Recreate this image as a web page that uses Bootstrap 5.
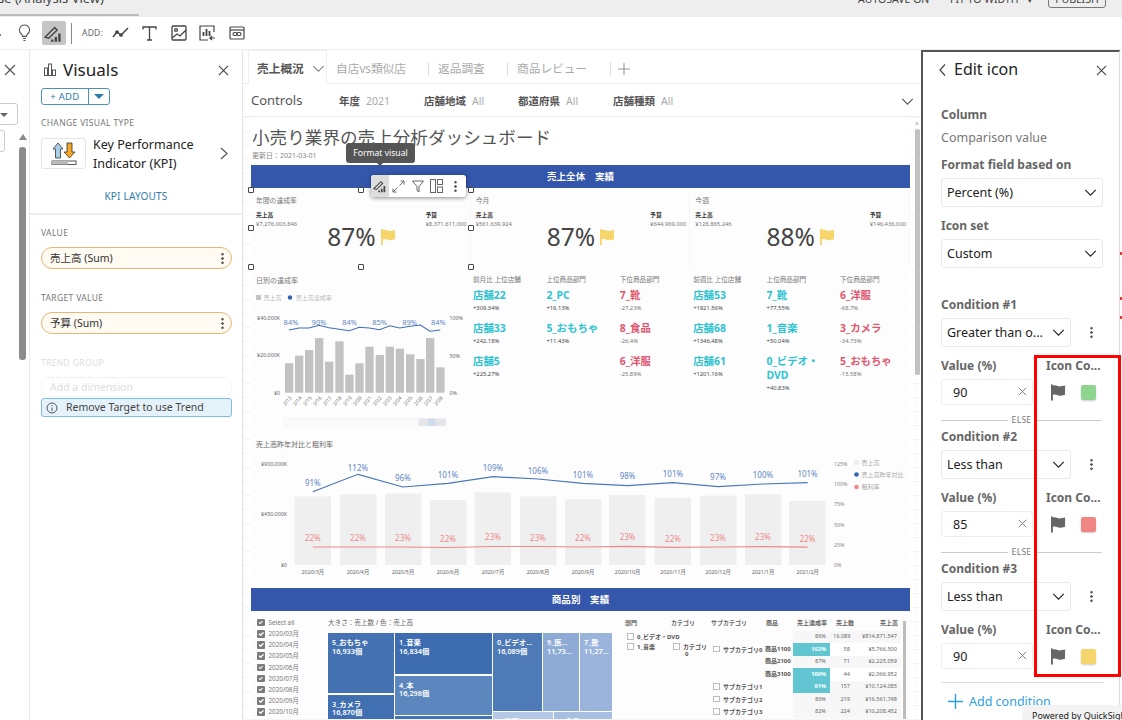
<!DOCTYPE html>
<html lang="ja">
<head>
<meta charset="utf-8">
<title>Edit icon</title>
<link href="https://cdn.jsdelivr.net/npm/bootstrap@5.3.0/dist/css/bootstrap.min.css" rel="stylesheet">
<style>
html,body{width:1122px;height:720px;overflow:hidden;margin:0;background:#fff}
body{font-family:"Noto Sans","Noto Sans CJK JP",sans-serif;color:#333;font-size:12px;line-height:1.2}
svg text{font-family:"Noto Sans","Noto Sans CJK JP",sans-serif}
.stage{position:relative;width:1122px;height:720px;overflow:hidden}
.topbar{height:17px;background:#eee;overflow:hidden;position:relative;color:#444}
.topbar-title{font-size:13px;width:139px;height:16px;border-bottom:2px solid #bbb;white-space:nowrap;overflow:hidden;flex:none}
.topbar-title span{display:block;margin-top:-10px;margin-left:-2px;line-height:16px}
.topbar-right{margin-top:-10px;font-size:10.5px;line-height:18px;height:18px}
.as{margin-left:858px;width:92px;white-space:nowrap}
.fit{width:98px;white-space:nowrap}
.pub{width:58px;height:18px;border:1px solid #777;border-radius:3px;text-align:center;line-height:16px}
.toolbar{height:33px;background:#fff;border-bottom:1px solid #eee}
.tool{width:29px;height:33px;flex:none}
.tool-first{margin-left:-19px}
.tool-on{background:#c5c5c5;width:24px;height:24px;border-radius:2px;margin:0 2.5px}
.tsep{width:1px;height:21px;background:#888;margin:0 10px 0 3px;flex:none}
.addlbl{font-size:8.5px;color:#666;width:23px;letter-spacing:.2px;flex:none}
.tool-gap{margin-left:1px}
.work{height:670px}
.stub{width:30px;flex:none;border-right:1px solid #e8e8e8;position:relative}
.stub-x{position:absolute;left:4px;top:14px}
.stub-dd{position:absolute;left:-6px;top:53px;width:24px;height:22px;border:1px solid #ccc;border-radius:3px}
.stub-tri{position:absolute;left:0;top:63px;width:0;height:0;border-left:4px solid transparent;border-right:4px solid transparent;border-top:4px solid #666}
.stub-dd2{position:absolute;left:-10px;top:80px;width:15px;height:22px;border:1px solid #ccc;border-radius:3px}
.stub-up{position:absolute;left:19px;top:84px;width:0;height:0;border-left:4px solid transparent;border-right:4px solid transparent;border-bottom:6px solid #888}
.stub-thumb{position:absolute;left:19px;top:97px;width:7px;height:213px;background:#8b8b8b;border-radius:3px}
.vis{width:213px;flex:none;border-right:1px solid #e6e6e6}
.vis-head{height:38px;padding:2px 13px 0 14px}
.vis-title{font-size:17px;color:#222;margin-left:7px}
.addgrp{margin-left:11px;width:69px;height:17px;border:1px solid #4a90b8;border-radius:3px;color:#2d7cab;font-size:9.5px;overflow:hidden}
.addgrp-l{width:47px;letter-spacing:.3px}
.addgrp-r{width:22px;height:100%;border-left:1px solid #4a90b8}
.tri{width:0;height:0;border-left:5px solid transparent;border-right:5px solid transparent;border-top:5px solid #2d7cab}
.seclbl{font-size:8.5px;color:#777;letter-spacing:.35px;margin-left:11px;line-height:10px}
.sec-first{margin-top:13px}
.sec-val{margin-top:13px}
.sec-tv{margin-top:24px}
.sec-tr{margin-top:24px;color:#ddd}
.type-row{margin:10px 0 0 11px;height:31px}
.type-box{width:45px;height:31px;border:1px solid #e5e5e5;border-radius:3px;flex:none}
.type-txt{font-size:12.5px;line-height:19px;color:#222;margin-left:7px;width:127px;white-space:nowrap}
.kpilay{font-size:10px;color:#2f7dae;text-align:center;margin-top:22px;letter-spacing:.2px;line-height:10px}
.hr1{height:2px;background:#eee;margin-top:12px}
.pill{margin:9px 10px 0 11px;height:22px;border:1.5px solid #e6b873;border-radius:11px;background:#fffaf2;padding:0 7px 0 8px;font-size:10.5px;color:#333}
.kebab{width:3px;height:13px;background:radial-gradient(circle,#555 1.1px,transparent 1.4px) 0 0/3px 4.33px repeat-y;flex:none}
.dashed{margin:9px 10px 0 11px;height:20px;border:1.5px dotted #d5ebf7;border-radius:9px;color:#ddd;font-size:10.5px;padding:0 8px}
.infobox{margin:1px 10px 0 11px;height:19px;border:1px solid #7dbce4;border-radius:3px;background:#e6f2fa;font-size:10.5px;color:#444;padding:0 4px}
.center{width:678px;flex:none;position:relative;overflow:hidden}
.tabs{height:34px;border-bottom:1px solid #eee;padding-left:5px;background:#fff}
.tab-on{width:79px;height:34px;border:1px solid #eee;border-bottom:1px solid #fff;padding:4px 0 0 8px;font-weight:700;font-size:11.7px;color:#555;flex:none;gap:8px}
.tab-off{font-size:11.7px;color:#aaa;white-space:nowrap;flex:none;padding-top:4px}
.vsep{width:1px;height:14px;background:#ddd;flex:none;margin-top:4px}
.t-a{margin-left:9px;width:83px}
.t-b{margin-left:9px;width:69px}
.t-c{margin-left:9px;width:93px}
.s-a{margin-left:9px}
.plus{margin:4px 0 0 7px}
.ctl{height:33px;border-bottom:1px solid #eee;padding:2px 0 0 8px;position:relative}
.ctl-t{font-size:13px;color:#555;width:88px;flex:none}
.ctl-k{font-weight:700;font-size:10.5px;color:#555;flex:none;margin-right:6px}
.ctl-v{font-size:10.5px;color:#aaa;flex:none}
.cv1{width:58px}.cv2{width:46px}.cv3{width:47px}.cv4{width:240px}
.sheet{height:603px;padding-left:8px;background-color:#fff;background-image:linear-gradient(#f5f5f5 1px,transparent 1px),linear-gradient(90deg,#f7f7f7 1px,transparent 1px);background-size:14px 14px}
.sheet-in{width:659px;flex:none}
.bar-scroll{position:relative;width:5px;margin-left:5px;flex:none}
.scr-thumb{position:absolute;top:12px;left:0;width:5px;height:246px;background:#c2c2c2;border-radius:2px}
.scr-up{position:absolute;top:4px;left:0;width:0;height:0;border-left:2.5px solid transparent;border-right:2.5px solid transparent;border-bottom:4px solid #ccc}
.dash-title{font-size:17.6px;color:#555;height:34px;padding-top:9px;line-height:22px;white-space:nowrap;background:#fff;padding-left:1px}
.dash-date{font-size:7px;color:#888;height:14px;padding:1px 0 0 1px;background:#fff}
.band{height:23px;background:#3557ab;color:#fff;font-weight:700;font-size:9.5px;letter-spacing:.1px}
.kpi-row{height:80px;background:#fdfdfd}
.kpi{padding:9px 3px 0 5px;flex:1 1 0;border-right:1px solid #f6f6f6}
.kpi-t{font-size:6.8px;color:#777;line-height:8px}
.kpi-s{margin-top:6px;font-size:5.8px;line-height:9px;color:#777;height:18px}
.kpi-s b{display:block;color:#333;font-weight:700}
.kpi-big{margin-top:-6px;height:28px;font-size:24.5px;color:#444;line-height:28px;gap:5px}
.mid{height:164px;background:#fdfdfd}
.daily{width:220px;flex:none;display:block}
.tops{flex:1}
.topcol{width:73.4px;flex:none;padding:8px 0 0 2px}
.topcol-h{font-size:6.6px;color:#777;line-height:8px;height:8px;white-space:nowrap}
.topcol-i{height:33px;padding-top:4px}
.big-t{font-size:10.4px;font-weight:700;line-height:14px;white-space:nowrap}
.big-t.up{color:#2cc3d1}
.big-t.dn{color:#e0566f}
.sub-t{font-size:5.8px;color:#444;line-height:9px;margin-top:2px}
.dn+.sub-t{color:#777}
.combo{display:block;width:659px;height:156px;background:#fdfdfd}
.prod{height:108px;background:#fdfdfd;overflow:hidden}
.filt{width:77px;flex:none;padding:6px 0 0 6px}
.filt-i{height:11.2px;font-size:6.3px;color:#777;gap:4px;white-space:nowrap}
.filt-i .form-check-input{width:7.5px;height:7.5px;margin:0;background-color:#7b7b7b;border:0;border-radius:1px;flex:none;float:none}
.tree-wrap{width:293px;flex:none}
.tree-t{font-size:6.6px;color:#666;height:22px;padding-top:8px;line-height:8px}
.tree{width:284px;gap:1.5px;color:#fff;font-size:7.3px;line-height:8.6px;font-weight:600;height:90px}
.tc{padding:5px 0 0 4px;overflow:hidden;white-space:nowrap;flex:none}
.tstack{display:flex;flex-direction:column;gap:1.5px;flex:none}
.ts1{width:65.5px}.ts2{width:96.5px}.ts3{width:119px}
.c-toy{height:60px;background:#4472b3}.c-cam{height:40px;background:#4170b2}
.c-mus{height:41px;background:#3d6cb0}.c-book{height:39px;background:#5c86be}.c-x{height:20px;background:#4472b3}
.tr-a{height:77.5px;gap:1.5px}.tr-b{height:20px;gap:1.5px}
.c-vid{width:48.5px;height:77.5px;background:#4e7ab7}.c-med{width:35.5px;height:77.5px;background:#8eabd6}.c-sho{width:32px;height:77.5px;background:#99b3db}
.c-clo{width:59.5px;height:20px;background:#b4c7e5}.c-foo{width:58px;height:20px;background:#a9bfe1}
.pv-wrap{width:279px;flex:none;margin-left:1px}
.pv.table{width:279px;table-layout:fixed;margin:6px 0 0;--bs-table-bg:transparent;font-size:5.6px;color:#666}
.pv.table>:not(caption)>*>*{padding:0 3px;height:12.5px;line-height:7px;border:0;box-shadow:none;vertical-align:middle;white-space:nowrap;background:transparent;overflow:hidden}
.pv.table>thead>tr>th{font-weight:700;font-size:6px;color:#666;height:13.5px}
.pv.table>:not(caption)>*>*.nm{font-weight:700;font-size:6px;color:#555;padding-left:5px}
.pv.table>:not(caption)>*>*.np{padding-left:2px}
.pv .nm i{display:inline-block;width:6.5px;height:6.5px;border:1px solid #bbb;margin-right:3.5px;vertical-align:-1px}
.pv.table>:not(caption)>*>*.mt{text-align:right;background:#f7f7f7;padding-right:4px}
.pv.table>:not(caption)>*>*.mt.wh{background:#fff}
.pv.table>:not(caption)>*>*.m2{padding-right:7px}
.pv.table>:not(caption)>*>*.hit{background:#62c6d2;color:#fff;font-weight:700;text-align:right;padding-right:4px}
.c1{width:46px}.c2{width:40px}.c3{width:55px}.c4{width:30px}.c5{width:37px}.c6{width:27px}.c7{width:44px}
.pv-scroll{width:3px;background:#bdbdbd;height:100px;margin:10px 0 0 2px;flex:none}
.edit{width:199px;height:670px;flex:none;border:solid #555;border-width:2px 0 0 2px;border-right:1px solid #ddd;padding-left:18px;position:relative;overflow:hidden}
.edit-head{height:36px;width:166px}
.edit-back{margin-left:-2px}
.edit-title{font-size:16px;color:#222;margin-left:8px}
.flbl{font-weight:700;font-size:12px;color:#666;height:18px;line-height:18px;white-space:nowrap}
.fval{font-size:12.5px;color:#777;height:18px;line-height:18px}
.sel{height:29px;border:1px solid #e9e9e9;border-radius:3px;font-size:12.5px;color:#222;padding:0 5px;width:162px;background:#fff}
.sel-s{width:130px}
.mt4{margin-top:4px}.mt5{margin-top:5px}.mt9{margin-top:9px}.mt10{margin-top:10px}.mt18{margin-top:18px}.mt28{margin-top:28px}
.inp.form-control{width:92px;height:26px;border:1px solid #eee;border-radius:3px;font-size:12.5px;color:#222;padding:0 0 0 11px;box-shadow:none}
.inp-wrap{position:relative;width:92px;flex:none;margin-top:4px}
.inp-x{position:absolute;left:77px;top:8px}
.iconcol{margin-left:13px;width:62px;flex:none}
.ic-swatches{margin-top:4px;height:26px;padding-left:5px;gap:15px}
.sw{width:15px;height:15px;border-radius:2px;box-shadow:0 1px 2px rgba(0,0,0,.2)}
.sw-g{background:#8ed68f}.sw-r{background:#f08683}.sw-y{background:#f6d56a}
.keb-g{margin-left:19px}
.else-row{height:15px;margin-top:8px;width:161px;gap:4px;font-size:8.5px;color:#777;letter-spacing:.3px}
.else-line{height:1px;background:#ccc;flex:1}
.add-cond{margin-top:5px;color:#2e9fe0;font-size:12.5px;height:26px;padding-left:7px;gap:6px}
.hr2{height:1px;background:#ddd;width:163px;margin-top:13px}
.redbox{position:absolute;left:1034px;top:355px;width:87px;height:322px;border:3px solid #f00;z-index:20}
.pw{position:absolute;left:1022px;top:705px;width:100px;height:15px;background:#f3f3f3;font-size:9px;color:#222;white-space:nowrap;gap:4px;padding:5px 0 0 6px;z-index:21;overflow:hidden;line-height:11px}
.hd{position:absolute;width:6px;height:6px;border:1.2px solid #444;background:#fff;border-radius:1px;z-index:5}
.h1{left:248px}.h2{left:358px}.h3{left:468px}
.ya{top:187px}.yb{top:225px}.yc{top:264px}
.tip{position:absolute;left:346px;top:143px;width:69px;height:20px;background:#555;color:#fff;font-size:8.6px;border-radius:3px;z-index:6}
.tip::after{content:"";position:absolute;left:31px;top:20px;border-left:3px solid transparent;border-right:3px solid transparent;border-top:3px solid #555}
.fmt{position:absolute;left:371px;top:175px;width:95px;height:22px;background:#fff;border-radius:3px;box-shadow:0 1px 4px rgba(0,0,0,.45);z-index:6}
.fmt-on{width:18px;height:22px;background:#ddd;border-radius:3px 0 0 3px}
.fmt-i{width:19px;height:22px}
.edge{position:absolute;left:1120px;width:2px;height:3px;background:#e33;z-index:1}
.e1{top:252px}.e2{top:297px}.e3{top:316px}
</style>
</head>
<body>
<svg width="0" height="0" class="d-block position-absolute">
<symbol id="flag" viewBox="0 0 16 17"><path d="M0 0h2v17H0zM2 1c3-1 5 1 7 1 2 0 4-.6 6-1v10c-2 .6-4 1-6 1-2 0-4-2-7-1z"/></symbol>
<symbol id="x" viewBox="0 0 12 12"><path d="M1 1l10 10M11 1L1 11" stroke="currentColor" stroke-width="1.2" fill="none"/></symbol>
<symbol id="chev" viewBox="0 0 14 8"><path d="M1 1l6 6 6-6" stroke="currentColor" stroke-width="1.3" fill="none"/></symbol>
<symbol id="fmtico" viewBox="0 0 16 16"><path d="M1 11L9 3l2 2-7 7z" fill="none" stroke="currentColor" stroke-width="1.2"/><path d="M9 15v-4h2v4zM12 15V8h2v7zM6 15v-2h2v2z" fill="currentColor"/></symbol>
</svg>
<div class="stage">
 <div class="topbar d-flex">
  <div class="topbar-title"><span>se (Analysis View)</span></div>
  <div class="topbar-right d-flex position-absolute top-0 start-0">
   <div class="as">AUTOSAVE ON</div><div class="fit">FIT TO WIDTH &#160; &#9662;</div><div class="pub">PUBLISH</div>
  </div>
 </div>
 <div class="toolbar d-flex align-items-center">
  <div class="tool tool-first d-flex align-items-center justify-content-center"><svg width="14" height="18" viewBox="0 0 14 18" fill="none" stroke="#555" stroke-width="1.3"><path d="M9 2L2 11h10M9 2v14"/></svg></div>
  <div class="tool d-flex align-items-center justify-content-center"><svg width="13" height="18" viewBox="0 0 13 18" fill="none" stroke="#555" stroke-width="1.1"><path d="M6.5 1a5 5 0 0 0-3 9c.7.6 1 1.4 1 2.4h4c0-1 .3-1.8 1-2.4a5 5 0 0 0-3-9zM5 14.5h3M5.5 16.5h2"/></svg></div>
  <div class="tool tool-on d-flex align-items-center justify-content-center"><svg width="19" height="19" viewBox="0 0 16 16" color="#444"><use href="#fmtico"/></svg></div>
  <div class="tsep"></div>
  <div class="addlbl">ADD:</div>
  <div class="tool tool-gap d-flex align-items-center justify-content-center"><svg width="17" height="12" viewBox="0 0 17 12" fill="none" stroke="#444" stroke-width="1.5"><path d="M1 10l4-5 4 3 7-7"/><circle cx="5" cy="5" r="1.1" fill="#444"/><circle cx="9" cy="8" r="1.1" fill="#444"/></svg></div>
  <div class="tool d-flex align-items-center justify-content-center"><svg width="15" height="15" viewBox="0 0 15 15" fill="none" stroke="#444" stroke-width="1.3"><path d="M1 3.5V1h13v2.5M7.5 1v13M5 14h5"/></svg></div>
  <div class="tool d-flex align-items-center justify-content-center"><svg width="16" height="16" viewBox="0 0 16 16" fill="none" stroke="#444" stroke-width="1.3"><rect x="1" y="1" width="14" height="14" rx="1"/><circle cx="5" cy="5" r="1.4"/><path d="M1 13l5-4 3 2 6-6"/></svg></div>
  <div class="tool d-flex align-items-center justify-content-center"><svg width="17" height="16" viewBox="0 0 17 16" fill="none" stroke="#444" stroke-width="1.2"><path d="M15 7V1H1v14h8"/><path d="M4.5 11V7M7.5 11V4M10.5 11V6" stroke-width="1.8"/><path d="M16 13h-5l2-2M11 13l2 2"/></svg></div>
  <div class="tool d-flex align-items-center justify-content-center"><svg width="16" height="14" viewBox="0 0 16 14" fill="none" stroke="#444" stroke-width="1.2"><rect x="1" y="1" width="14" height="12" rx="1"/><path d="M1 4h14"/><rect x="4" y="6.5" width="4" height="3" rx="1.5"/><rect x="8" y="6.5" width="4" height="3" rx="1.5"/></svg></div>
 </div>
 <div class="work d-flex">
  <div class="stub">
   <svg class="stub-x" width="12" height="12" color="#555"><use href="#x"/></svg>
   <div class="stub-dd"></div><div class="stub-tri"></div><div class="stub-dd2"></div>
   <div class="stub-up"></div><div class="stub-thumb"></div>
  </div>
  <div class="vis">
   <div class="vis-head d-flex align-items-center justify-content-between">
    <div class="d-flex align-items-center"><svg width="12" height="13" viewBox="0 0 12 13" fill="none" stroke="#555"><rect x=".5" y="5" width="3" height="7.5"/><rect x="4.5" y="1" width="3" height="11.5"/><rect x="8.5" y="7" width="3" height="5.5"/></svg><span class="vis-title">Visuals</span></div>
    <svg width="11" height="11" color="#444"><use href="#x"/></svg>
   </div>
   <div class="addgrp d-flex align-items-center">
    <div class="addgrp-l text-center">+ ADD</div><div class="addgrp-r d-flex align-items-center justify-content-center"><span class="tri"></span></div>
   </div>
   <div class="seclbl sec-first">CHANGE VISUAL TYPE</div>
   <div class="type-row d-flex align-items-center">
    <div class="type-box d-flex align-items-center justify-content-center">
     <svg width="26" height="24" viewBox="0 0 26 24"><path d="M7 1l5 6H9.5v9h-5V7H2z" fill="#a9cfe8" stroke="#333" stroke-width=".8"/><path d="M16 1h5v9h3l-5.5 6-5.5-6h3z" fill="#f5a623" stroke="#333" stroke-width=".8"/><rect x="1" y="19" width="24" height="3.5" fill="#fff" stroke="#555"/><rect x="1" y="19" width="16" height="3.5" fill="#bbb"/></svg>
    </div>
    <div class="type-txt">Key Performance<br>Indicator (KPI)</div>
    <svg width="8" height="13" viewBox="0 0 8 13" fill="none" stroke="#555" stroke-width="1.2"><path d="M1 1l6 5.5L1 12"/></svg>
   </div>
   <div class="kpilay">KPI LAYOUTS</div>
   <div class="hr1"></div>
   <div class="seclbl sec-val">VALUE</div>
   <div class="pill d-flex align-items-center justify-content-between"><span>売上高 (Sum)</span><span class="kebab"></span></div>
   <div class="seclbl sec-tv">TARGET VALUE</div>
   <div class="pill d-flex align-items-center justify-content-between"><span>予算 (Sum)</span><span class="kebab"></span></div>
   <div class="seclbl sec-tr">TREND GROUP</div>
   <div class="dashed d-flex align-items-center">Add a dimension</div>
   <div class="infobox d-flex align-items-center gap-2"><svg width="12" height="12" viewBox="0 0 12 12" fill="none" stroke="#555"><circle cx="6" cy="6" r="5"/><path d="M6 5.5v3.5M6 3v1.2"/></svg><span>Remove Target to use Trend</span></div>
  </div>
  <div class="center">
   <div class="tabs d-flex align-items-center">
    <div class="tab-on d-flex align-items-center">売上概況<svg width="13" height="7" color="#888"><use href="#chev"/></svg></div>
    <div class="tab-off t-a">自店vs類似店</div>
    <div class="vsep s-a"></div>
    <div class="tab-off t-b">返品調査</div>
    <div class="vsep"></div>
    <div class="tab-off t-c">商品レビュー</div>
    <div class="vsep"></div>
    <svg class="plus" width="12" height="12" viewBox="0 0 12 12" stroke="#999" stroke-width="1.1"><path d="M6 0v12M0 6h12"/></svg>
   </div>
   <div class="ctl d-flex align-items-center">
    <div class="ctl-t">Controls</div>
    <div class="ctl-k">年度</div><div class="ctl-v cv1">2021</div>
    <div class="ctl-k">店舗地域</div><div class="ctl-v cv2">All</div>
    <div class="ctl-k">都道府県</div><div class="ctl-v cv3">All</div>
    <div class="ctl-k">店舗種類</div><div class="ctl-v cv4">All</div>
    <svg width="13" height="7" color="#555"><use href="#chev"/></svg>
   </div>
   <div class="sheet d-flex">
    <div class="sheet-in">
     <div class="dash-title">小売り業界の売上分析ダッシュボード</div>
     <div class="dash-date">更新日：2021-03-01</div>
     <div class="band d-flex align-items-center justify-content-center">売上全体　実績</div>
     <div class="kpi-row d-flex">
      <div class="kpi">
       <div class="kpi-t">年間の達成率</div>
       <div class="kpi-s d-flex justify-content-between"><div><b>売上高</b>¥7,276,003,846</div><div><b>予算</b>¥8,371,611,000</div></div>
       <div class="kpi-big d-flex align-items-center justify-content-center">87%<svg width="15" height="16" fill="#f6d56a"><use href="#flag"/></svg></div>
      </div>
      <div class="kpi">
       <div class="kpi-t">今月</div>
       <div class="kpi-s d-flex justify-content-between"><div><b>売上高</b>¥561,639,924</div><div><b>予算</b>¥644,969,000</div></div>
       <div class="kpi-big d-flex align-items-center justify-content-center">87%<svg width="15" height="16" fill="#f6d56a"><use href="#flag"/></svg></div>
      </div>
      <div class="kpi">
       <div class="kpi-t">今週</div>
       <div class="kpi-s d-flex justify-content-between"><div><b>売上高</b>¥128,865,246</div><div><b>予算</b>¥146,436,000</div></div>
       <div class="kpi-big d-flex align-items-center justify-content-center">88%<svg width="15" height="16" fill="#f6d56a"><use href="#flag"/></svg></div>
      </div>
     </div>
     <div class="mid d-flex">
      <svg class="daily" height="164" viewBox="251 268 220 164">
       <text x="256" y="283" font-size="7" fill="#777">日別の達成率</text>
       <rect x="256" y="295" width="5" height="5" fill="#c4c4c4"/><text x="263.5" y="300" font-size="6" fill="#bbb">売上高</text>
       <circle cx="290" cy="297.5" r="2.2" fill="#3464b4"/><text x="295.7" y="300" font-size="6" fill="#bbb">売上高達成率</text>
       <g font-size="5.3" fill="#666" text-anchor="end"><text x="280" y="320">¥40,000K</text><text x="280" y="357">¥20,000K</text><text x="280" y="394.5">¥0</text></g>
       <g font-size="5.3" fill="#666"><text x="449.5" y="320">100%</text><text x="449.5" y="357.5">50%</text><text x="449.5" y="394.5">0%</text></g>
       <g fill="#c2c2c2">
        <rect x="285" y="363.3" width="8.3" height="29.4"/><rect x="295" y="355.7" width="8.3" height="37"/><rect x="305" y="350" width="8.3" height="42.7"/><rect x="315" y="338" width="8.3" height="54.7"/><rect x="325" y="361.7" width="8.3" height="31"/><rect x="335.3" y="341.3" width="8.3" height="51.4"/><rect x="345.3" y="374.7" width="8.3" height="18"/><rect x="355.3" y="363.3" width="8.3" height="29.4"/><rect x="365.3" y="346.7" width="8.3" height="46"/><rect x="375.7" y="355" width="8.3" height="37.7"/><rect x="385.7" y="346.7" width="8.3" height="46"/><rect x="395.7" y="348.7" width="8.3" height="44"/><rect x="406" y="354.3" width="8.3" height="38.4"/><rect x="416.3" y="359" width="8.3" height="33.7"/><rect x="426" y="338" width="8.3" height="54.7"/><rect x="436.3" y="367.3" width="8.3" height="25.4"/>
       </g>
       <polyline points="289,330 299,328 309,328 319,325.3 329,327.7 339.3,329.3 349.3,330.7 359.3,327.3 369.3,328 379.7,329.7 389.7,325.7 399.7,328 410,326.3 420.3,325 430,331.3 440.3,330" fill="none" stroke="#3f6fb8" stroke-width="1.1"/>
       <g font-size="7.5" fill="#5d87c6" text-anchor="middle"><text x="291" y="325">84%</text><text x="319" y="325">90%</text><text x="349.7" y="325">84%</text><text x="379.7" y="325">85%</text><text x="409.7" y="325">89%</text><text x="438.3" y="325">84%</text></g>
       <g font-size="5" fill="#666" text-anchor="end">
        <text transform="translate(292,398) rotate(-50)">2/13</text><text transform="translate(302,398) rotate(-50)">2/14</text><text transform="translate(312,398) rotate(-50)">2/15</text><text transform="translate(322,398) rotate(-50)">2/16</text><text transform="translate(332,398) rotate(-50)">2/17</text><text transform="translate(342,398) rotate(-50)">2/18</text><text transform="translate(352,398) rotate(-50)">2/19</text><text transform="translate(362,398) rotate(-50)">2/20</text><text transform="translate(372,398) rotate(-50)">2/21</text><text transform="translate(382,398) rotate(-50)">2/22</text><text transform="translate(392,398) rotate(-50)">2/23</text><text transform="translate(402,398) rotate(-50)">2/24</text><text transform="translate(412.5,398) rotate(-50)">2/25</text><text transform="translate(423,398) rotate(-50)">2/26</text><text transform="translate(433,398) rotate(-50)">2/27</text><text transform="translate(443,398) rotate(-50)">2/28</text>
       </g>
       <rect x="284" y="418.7" width="162" height="7.3" fill="#fafafa" stroke="#eee" stroke-width=".5"/>
       <rect x="418.3" y="418.7" width="27.5" height="7.3" fill="#e4e6ea"/><rect x="428" y="418.7" width="7.5" height="7.3" fill="#cfdcec"/>
      </svg>
      <div class="tops d-flex">
       <div class="topcol">
        <div class="topcol-h">前月比 上位店舗</div>
        <div class="topcol-i"><div class="big-t up">店舗22</div><div class="sub-t">+309.34%</div></div>
        <div class="topcol-i"><div class="big-t up">店舗33</div><div class="sub-t">+242.18%</div></div>
        <div class="topcol-i"><div class="big-t up">店舗5</div><div class="sub-t">+225.27%</div></div>
       </div>
       <div class="topcol">
        <div class="topcol-h">上位商品部門</div>
        <div class="topcol-i"><div class="big-t up">2_PC</div><div class="sub-t">+16.13%</div></div>
        <div class="topcol-i"><div class="big-t up">5_おもちゃ</div><div class="sub-t">+11.43%</div></div>
       </div>
       <div class="topcol">
        <div class="topcol-h">下位商品部門</div>
        <div class="topcol-i"><div class="big-t dn">7_靴</div><div class="sub-t">-27.23%</div></div>
        <div class="topcol-i"><div class="big-t dn">8_食品</div><div class="sub-t">-26.4%</div></div>
        <div class="topcol-i"><div class="big-t dn">6_洋服</div><div class="sub-t">-25.89%</div></div>
       </div>
       <div class="topcol">
        <div class="topcol-h">前週比 上位店舗</div>
        <div class="topcol-i"><div class="big-t up">店舗53</div><div class="sub-t">+1921.56%</div></div>
        <div class="topcol-i"><div class="big-t up">店舗68</div><div class="sub-t">+1346.48%</div></div>
        <div class="topcol-i"><div class="big-t up">店舗61</div><div class="sub-t">+1201.16%</div></div>
       </div>
       <div class="topcol">
        <div class="topcol-h">上位商品部門</div>
        <div class="topcol-i"><div class="big-t up">7_靴</div><div class="sub-t">+77.55%</div></div>
        <div class="topcol-i"><div class="big-t up">1_音楽</div><div class="sub-t">+50.04%</div></div>
        <div class="topcol-i"><div class="big-t up">0_ビデオ・<br>DVD</div><div class="sub-t">+40.83%</div></div>
       </div>
       <div class="topcol">
        <div class="topcol-h">下位商品部門</div>
        <div class="topcol-i"><div class="big-t dn">6_洋服</div><div class="sub-t">-68.7%</div></div>
        <div class="topcol-i"><div class="big-t dn">3_カメラ</div><div class="sub-t">-34.73%</div></div>
        <div class="topcol-i"><div class="big-t dn">5_おもちゃ</div><div class="sub-t">-15.58%</div></div>
       </div>
      </div>
     </div>
     <svg class="combo" viewBox="251 432 659 156">
      <text x="256" y="447" font-size="7" fill="#666">売上高昨年対比と粗利率</text>
      <g font-size="5.3" fill="#666" text-anchor="end"><text x="287" y="465.5">¥900,000K</text><text x="287" y="516">¥450,000K</text><text x="287" y="567">¥0</text></g>
      <g fill="#efefef"><rect x="294.6" y="496.3" width="36.5" height="68.7"/><rect x="340" y="494.3" width="36.5" height="70.7"/><rect x="385" y="493.7" width="36.5" height="71.3"/><rect x="430" y="500" width="36.5" height="65"/><rect x="474.6" y="492.3" width="36.5" height="72.7"/><rect x="520" y="496.3" width="36.5" height="68.7"/><rect x="565" y="499.3" width="36.5" height="65.7"/><rect x="609" y="495" width="36.5" height="70"/><rect x="654.6" y="497.7" width="36.5" height="67.3"/><rect x="700" y="495.7" width="36.5" height="69.3"/><rect x="745" y="494.3" width="36.5" height="70.7"/><rect x="789" y="501" width="36.5" height="64"/></g>
      <polyline points="312.8,491.7 358,474.3 403,487 448,483.3 493,476.7 538,479 583,483.3 627.6,485.7 673,482.7 718,486.7 763,484 807.6,482.7" fill="none" stroke="#4a76bb" stroke-width="1.2"/>
      <g font-size="8" fill="#5d87c6" text-anchor="middle"><text x="312.8" y="485.5">91%</text><text x="358" y="471">112%</text><text x="403" y="480.5">96%</text><text x="448" y="477.5">101%</text><text x="493" y="471">109%</text><text x="538" y="473.5">106%</text><text x="583" y="477.5">101%</text><text x="627.6" y="479">98%</text><text x="673" y="476.5">101%</text><text x="718" y="480">97%</text><text x="763" y="477.5">100%</text><text x="807.6" y="476.5">101%</text></g>
      <polyline points="312.8,547 358,547 403,547 448,547.5 493,546.5 538,546.5 583,547 627.6,546.3 673,547.3 718,547 763,546.7 807.6,547.2" fill="none" stroke="#ee8a8a" stroke-width="1.2"/>
      <g font-size="8" fill="#ee8a8a" text-anchor="middle"><text x="312.8" y="540.5">22%</text><text x="358" y="540.5">22%</text><text x="403" y="540.5">23%</text><text x="448" y="541.5">22%</text><text x="493" y="540">23%</text><text x="538" y="540.5">23%</text><text x="583" y="540.5">22%</text><text x="627.6" y="540">23%</text><text x="673" y="541.5">22%</text><text x="718" y="540.5">23%</text><text x="763" y="540">23%</text><text x="807.6" y="541.5">22%</text></g>
      <g font-size="5.3" fill="#666" text-anchor="middle"><text x="312.8" y="574">2020/3月</text><text x="358" y="574">2020/4月</text><text x="403" y="574">2020/5月</text><text x="448" y="574">2020/6月</text><text x="493" y="574">2020/7月</text><text x="538" y="574">2020/8月</text><text x="583" y="574">2020/9月</text><text x="627.6" y="574">2020/10月</text><text x="673" y="574">2020/11月</text><text x="718" y="574">2020/12月</text><text x="763" y="574">2021/1月</text><text x="807.6" y="574">2021/2月</text></g>
      <g font-size="5.3" fill="#888"><text x="834" y="465.5">125%</text><text x="834" y="486">100%</text><text x="834" y="506">75%</text><text x="834" y="526.5">50%</text><text x="834" y="547">25%</text><text x="834" y="567">0%</text></g>
      <rect x="854" y="460" width="5" height="5" fill="#eee"/><text x="861.5" y="464.5" font-size="6" fill="#aaa">売上高</text>
      <circle cx="856.5" cy="474.5" r="2.3" fill="#3464b4"/><text x="861.5" y="476.5" font-size="6" fill="#aaa">売上高昨年対比</text>
      <circle cx="856.5" cy="487" r="2.3" fill="#ee8a8a"/><text x="861.5" y="489" font-size="6" fill="#aaa">粗利率</text>
     </svg>
     <div class="band d-flex align-items-center justify-content-center">商品別　実績</div>
     <div class="prod d-flex">
      <div class="filt">
       <div class="filt-i d-flex align-items-center"><input class="form-check-input" type="checkbox" checked aria-label="Select all"><span>Select all</span></div>
       <div class="filt-i d-flex align-items-center"><input class="form-check-input" type="checkbox" checked aria-label="2020/03月"><span>2020/03月</span></div>
       <div class="filt-i d-flex align-items-center"><input class="form-check-input" type="checkbox" checked aria-label="2020/04月"><span>2020/04月</span></div>
       <div class="filt-i d-flex align-items-center"><input class="form-check-input" type="checkbox" checked aria-label="2020/05月"><span>2020/05月</span></div>
       <div class="filt-i d-flex align-items-center"><input class="form-check-input" type="checkbox" checked aria-label="2020/06月"><span>2020/06月</span></div>
       <div class="filt-i d-flex align-items-center"><input class="form-check-input" type="checkbox" checked aria-label="2020/07月"><span>2020/07月</span></div>
       <div class="filt-i d-flex align-items-center"><input class="form-check-input" type="checkbox" checked aria-label="2020/08月"><span>2020/08月</span></div>
       <div class="filt-i d-flex align-items-center"><input class="form-check-input" type="checkbox" checked aria-label="2020/09月"><span>2020/09月</span></div>
       <div class="filt-i d-flex align-items-center"><input class="form-check-input" type="checkbox" checked aria-label="2020/10月"><span>2020/10月</span></div>
      </div>
      <div class="tree-wrap">
       <div class="tree-t">大きさ：売上数 / 色：売上高</div>
       <div class="tree d-flex">
        <div class="tstack ts1">
         <div class="tc c-toy">5_おもちゃ<br>16,933個</div>
         <div class="tc c-cam">3_カメラ<br>16,870個</div>
        </div>
        <div class="tstack ts2">
         <div class="tc c-mus">1_音楽<br>16,834個</div>
         <div class="tc c-book">4_本<br>16,298個</div>
         <div class="tc c-x"></div>
        </div>
        <div class="tstack ts3">
         <div class="d-flex tr-a">
          <div class="tc c-vid">0_ビデオ...<br>16,089個</div>
          <div class="tc c-med">9_医...<br>11,73...</div>
          <div class="tc c-sho">7_靴<br>11,27...</div>
         </div>
         <div class="d-flex tr-b">
          <div class="tc c-clo">6_洋服</div>
          <div class="tc c-foo">8_食品</div>
         </div>
        </div>
       </div>
      </div>
      <div class="pv-wrap">
       <table class="pv table">
        <colgroup><col class="c1"><col class="c2"><col class="c3"><col class="c4"><col class="c5"><col class="c6"><col class="c7"></colgroup>
        <thead><tr><th>部門</th><th>カテゴリ</th><th>サブカテゴリ</th><th>商品</th><th class="text-end">売上達成率</th><th class="text-end">売上数</th><th class="text-end">売上高</th></tr></thead>
        <tbody>
         <tr><td colspan="4" class="nm"><i></i>0_ビデオ・DVD</td><td class="mt">86%</td><td class="mt m2">16,089</td><td class="mt">¥814,871,547</td></tr>
         <tr><td rowspan="7" class="nm align-top"><i></i>1_音楽</td><td rowspan="7" class="nm align-top"><i></i>カテゴリ<br>　　0</td><td class="nm"><i></i>サブカテゴリ0</td><td class="nm np">商品1100</td><td class="hit">102%</td><td class="mt m2 wh">58</td><td class="mt wh">¥5,766,500</td></tr>
         <tr><td></td><td class="nm np">商品2100</td><td class="mt">87%</td><td class="mt m2">71</td><td class="mt">¥2,225,059</td></tr>
         <tr><td></td><td class="nm np">商品3100</td><td class="hit">100%</td><td class="mt m2 wh">44</td><td class="mt wh">¥2,066,952</td></tr>
         <tr><td colspan="2" class="nm"><i></i>サブカテゴリ1</td><td class="hit">91%</td><td class="mt m2">157</td><td class="mt">¥10,124,085</td></tr>
         <tr><td colspan="2" class="nm"><i></i>サブカテゴリ2</td><td class="mt">86%</td><td class="mt m2">219</td><td class="mt">¥16,561,748</td></tr>
         <tr><td colspan="2" class="nm"><i></i>サブカテゴリ3</td><td class="mt">82%</td><td class="mt m2">224</td><td class="mt">¥10,208,452</td></tr>
        </tbody>
       </table>
      </div>
      <div class="pv-scroll"></div>
     </div>
    </div>
    <div class="bar-scroll"><div class="scr-up"></div><div class="scr-thumb"></div></div>
   </div>
  </div>
  <div class="edit">
   <div class="edit-head d-flex align-items-center justify-content-between">
    <div class="d-flex align-items-center"><svg class="edit-back" width="7" height="12" viewBox="0 0 7 12" fill="none" stroke="#444" stroke-width="1.2"><path d="M6 .5L1 6l5 5.5"/></svg><span class="edit-title">Edit icon</span></div>
    <svg width="11" height="11" color="#444"><use href="#x"/></svg>
   </div>
   <div class="flbl mt18">Column</div>
   <div class="fval mt5">Comparison value</div>
   <div class="flbl mt9">Format field based on</div>
   <div class="sel mt4 d-flex align-items-center justify-content-between">Percent (%)<svg width="13" height="7" color="#222"><use href="#chev"/></svg></div>
   <div class="flbl mt10">Icon set</div>
   <div class="sel mt4 d-flex align-items-center justify-content-between">Custom<svg width="13" height="7" color="#222"><use href="#chev"/></svg></div>

   <div class="flbl mt28">Condition #1</div>
   <div class="d-flex align-items-center mt4"><div class="sel sel-s d-flex align-items-center justify-content-between">Greater than o...<svg width="13" height="7" color="#222"><use href="#chev"/></svg></div><span class="kebab keb-g"></span></div>
   <div class="d-flex mt10">
    <div><div class="flbl">Value (%)</div><div class="inp-wrap"><input class="inp form-control" value="90" aria-label="Value"><svg class="inp-x" width="9" height="9" color="#777"><use href="#x"/></svg></div></div>
    <div class="iconcol"><div class="flbl">Icon Co...</div><div class="ic-swatches d-flex align-items-center"><svg width="15" height="17" fill="#666"><use href="#flag"/></svg><div class="sw sw-g"></div></div></div>
   </div>
   <div class="else-row d-flex align-items-center"><div class="else-line"></div><span>ELSE</span><div class="else-line"></div></div>

   <div class="flbl">Condition #2</div>
   <div class="d-flex align-items-center mt4"><div class="sel sel-s d-flex align-items-center justify-content-between">Less than<svg width="13" height="7" color="#222"><use href="#chev"/></svg></div><span class="kebab keb-g"></span></div>
   <div class="d-flex mt10">
    <div><div class="flbl">Value (%)</div><div class="inp-wrap"><input class="inp form-control" value="85" aria-label="Value"><svg class="inp-x" width="9" height="9" color="#777"><use href="#x"/></svg></div></div>
    <div class="iconcol"><div class="flbl">Icon Co...</div><div class="ic-swatches d-flex align-items-center"><svg width="15" height="17" fill="#666"><use href="#flag"/></svg><div class="sw sw-r"></div></div></div>
   </div>
   <div class="else-row d-flex align-items-center"><div class="else-line"></div><span>ELSE</span><div class="else-line"></div></div>

   <div class="flbl">Condition #3</div>
   <div class="d-flex align-items-center mt4"><div class="sel sel-s d-flex align-items-center justify-content-between">Less than<svg width="13" height="7" color="#222"><use href="#chev"/></svg></div><span class="kebab keb-g"></span></div>
   <div class="d-flex mt10">
    <div><div class="flbl">Value (%)</div><div class="inp-wrap"><input class="inp form-control" value="90" aria-label="Value"><svg class="inp-x" width="9" height="9" color="#777"><use href="#x"/></svg></div></div>
    <div class="iconcol"><div class="flbl">Icon Co...</div><div class="ic-swatches d-flex align-items-center"><svg width="15" height="17" fill="#666"><use href="#flag"/></svg><div class="sw sw-y"></div></div></div>
   </div>
   <div class="hr2"></div>
   <div class="add-cond d-flex align-items-center"><svg width="15" height="15" viewBox="0 0 15 15" stroke="#2e9fe0" stroke-width="1.4"><path d="M7.5 0v15M0 7.5h15"/></svg><span>Add condition</span></div>
  </div>
 </div>

 <div class="hd h1 ya"></div><div class="hd h2 ya"></div><div class="hd h3 ya"></div>
 <div class="hd h1 yb"></div><div class="hd h3 yb"></div>
 <div class="hd h1 yc"></div><div class="hd h2 yc"></div><div class="hd h3 yc"></div>
 <div class="tip d-flex align-items-center justify-content-center">Format visual</div>
 <div class="fmt d-flex align-items-center">
  <div class="fmt-on d-flex align-items-center justify-content-center"><svg width="14" height="14" viewBox="0 0 16 16" color="#444"><use href="#fmtico"/></svg></div>
  <div class="fmt-i d-flex align-items-center justify-content-center"><svg width="13" height="13" viewBox="0 0 13 13" fill="none" stroke="#666"><path d="M1 12l4.5-4.5M1 8.5V12h3.5M12 1L7.5 5.5M8.5 1H12v3.5"/></svg></div>
  <div class="fmt-i d-flex align-items-center justify-content-center"><svg width="12" height="13" viewBox="0 0 12 13" fill="none" stroke="#666"><path d="M.5 1h11L7 6.5V12L5 10.5v-4z"/></svg></div>
  <div class="fmt-i d-flex align-items-center justify-content-center"><svg width="13" height="14" viewBox="0 0 13 14" fill="none" stroke="#666"><rect x=".5" y=".5" width="5" height="13"/><rect x="7.5" y=".5" width="5" height="5"/><rect x="7.5" y="8" width="5" height="5.5"/></svg></div>
  <div class="fmt-i d-flex align-items-center justify-content-center"><span class="kebab"></span></div>
 </div>
 <div class="edge e1"></div><div class="edge e2"></div><div class="edge e3"></div>
 <div class="redbox"></div>
 <div class="pw d-flex align-items-start"><svg width="11" height="11" viewBox="0 0 10 10"><path d="M0 0h10v10H0z" fill="#222"/><path d="M0 10l4-5 3 2 3-5v8z" fill="#fff"/></svg><span>Powered by QuickSight</span></div>
</div>
</body>
</html>
